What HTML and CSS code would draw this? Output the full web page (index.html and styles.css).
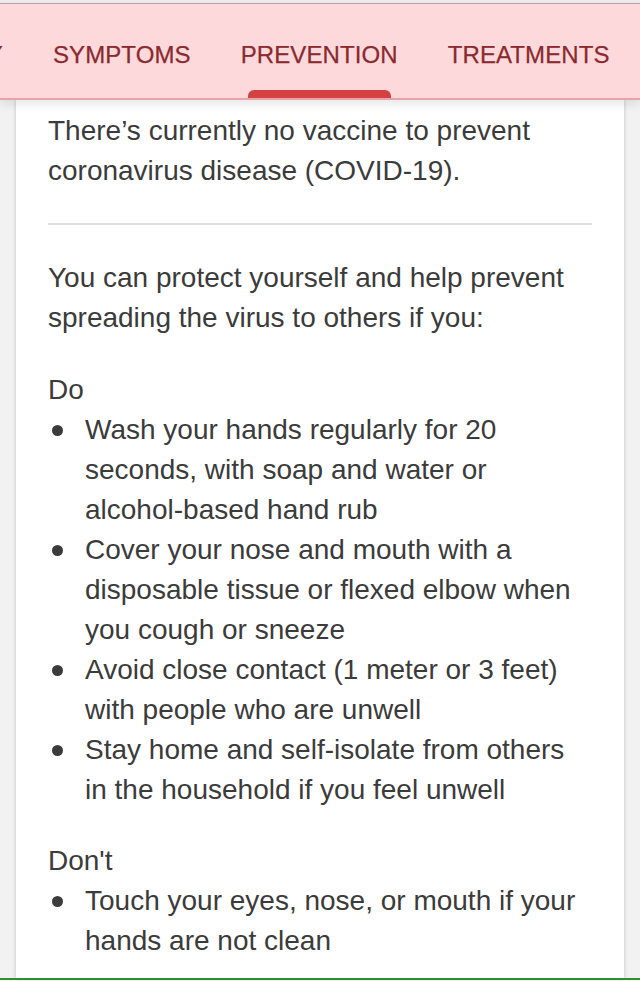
FILE: index.html
```html
<!DOCTYPE html>
<html lang="en">
<head>
<meta charset="utf-8">
<title>Prevention</title>
<link rel="stylesheet" href="styles.css">
</head>
<body>
<div class="page">
  <header class="topbar">
    <nav class="tabs">
      <div class="tab"><span class="label">SUMMARY</span><span class="ind"></span></div>
      <div class="tab"><span class="label">SYMPTOMS</span><span class="ind"></span></div>
      <div class="tab active"><span class="label">PREVENTION</span><span class="ind"></span></div>
      <div class="tab"><span class="label">TREATMENTS</span><span class="ind"></span></div>
    </nav>
  </header>
  <main class="card">
    <p class="intro">There’s currently no vaccine to prevent coronavirus disease (COVID-19).</p>
    <hr class="divider">
    <p class="lead">You can protect yourself and help prevent spreading the virus to others if you:</p>
    <p class="heading">Do</p>
    <ul class="bullets">
      <li>Wash your hands regularly for 20 seconds, with soap and water or alcohol-based hand rub</li>
      <li>Cover your nose and mouth with a disposable tissue or flexed elbow when you cough or sneeze</li>
      <li>Avoid close contact (1 meter or 3 feet) with people who are unwell</li>
      <li>Stay home and self-isolate from others in the household if you feel unwell</li>
    </ul>
    <p class="heading dont">Don't</p>
    <ul class="bullets">
      <li>Touch your eyes, nose, or mouth if your hands are not clean</li>
    </ul>
  </main>
  <div class="green-rule"></div>
</div>
</body>
</html>
```

FILE: styles.css
```css
* { box-sizing: border-box; }
html, body { margin: 0; padding: 0; }
body {
  background: #f2f2f2;
  font-family: "Liberation Sans", Arial, Helvetica, sans-serif;
  overflow: hidden;
}
.page {
  width: 640px;
  height: 981px;
  overflow: hidden;
}
.topbar {
  position: relative;
  z-index: 2;
  padding-top: 3px;
  background: #efe8e8;
  box-shadow: 0 4px 10px rgba(0, 0, 0, 0.10);
}
.tabs {
  display: flex;
  height: 97px;
  background: #fdd9db;
  border-top: 1px solid #b3a3a4;
  border-bottom: 2px solid #eaa3aa;
  overflow: hidden;
  margin: 0;
}
.tab {
  display: flex;
  flex-direction: column;
  flex: 0 0 auto;
  padding: 0 25px;
}
.tab:first-child { margin-left: -145px; }
.label {
  margin-top: 37px;
  font-size: 24px;
  line-height: 28px;
  color: #8a2a2e;
  letter-spacing: 0.1px;
  -webkit-text-stroke: 0.25px #8a2a2e;
  white-space: nowrap;
}
.ind {
  margin: auto 7px 0;
  height: 8px;
  border-radius: 6px 6px 0 0;
}
.tab.active .ind { background: #d44143; }

.card {
  width: 608px;
  margin: 0 16px;
  background: #fff;
  padding: 11px 32px 17px;
  box-shadow: 0 0 4px rgba(0, 0, 0, 0.22);
  color: #3b3b3b;
  font-size: 28px;
  line-height: 40px;
}
.card p { margin: 0; }
.divider {
  margin: 32px 0 33px;
  border: 0;
  height: 2px;
  background: #dedede;
}
.heading { margin-top: 32px !important; }
.heading.dont { margin-top: 31px !important; }
.bullets {
  list-style: none;
  margin: 0;
  padding: 0;
}
.bullets li {
  display: grid;
  grid-template-columns: 37px 1fr;
}
.bullets li::before {
  content: "";
  width: 11px;
  height: 11px;
  margin: 15px 0 0 4px;
  border-radius: 50%;
  background: #3b3b3b;
}
.green-rule {
  height: 2px;
  background: #2f8f2f;
}
```
